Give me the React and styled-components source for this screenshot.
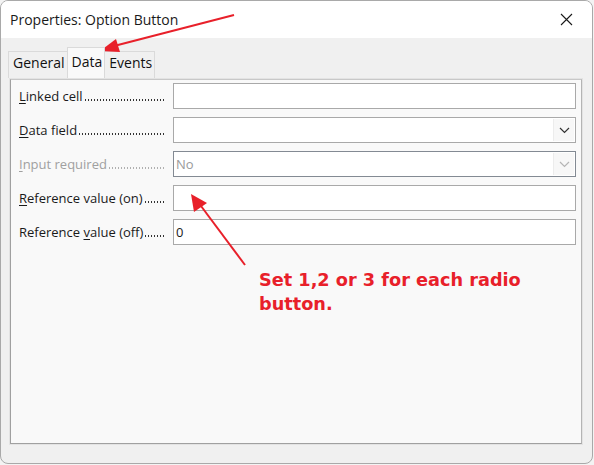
import React from 'react';
import styled, { createGlobalStyle, css } from 'styled-components';

const GlobalStyle = createGlobalStyle`
    html, body {
        margin: 0;
        padding: 0;
        background: #f3f3f3;
    }
    body {
        font-family: "Open Sans", "Noto Sans", "Liberation Sans", sans-serif;
    }
`;

const Window = styled.div`
    position: relative;
    box-sizing: border-box;
    width: 593px;
    height: 464px;
    border: 1px solid #a9a9a9;
    border-radius: 8px;
    background: #f0f0f0;
    overflow: hidden;
    display: flex;
    flex-direction: column;
`;

const TitleBar = styled.div`
    height: 37px;
    flex: 0 0 37px;
    background: #ffffff;
    display: flex;
    align-items: center;
    justify-content: space-between;
    padding: 0 9px 0 9px;
    font-size: 14px;
    color: #1a1a1a;
`;

const CloseButton = styled.div`
    width: 30px;
    height: 30px;
    display: flex;
    align-items: center;
    justify-content: center;
    margin-right: 2px;
`;

const TabBar = styled.div`
    display: flex;
    align-items: flex-end;
    padding: 9px 0 0 8px;
    height: 31px;
    box-sizing: content-box;
`;

const Tab = styled.div`
    box-sizing: border-box;
    height: 27px;
    padding: 0 2px 5px 4px;
    border: 1px solid #dadada;
    border-bottom: none;
    background: #f0f0f0;
    font-size: 14px;
    color: #111;
    display: flex;
    align-items: center;
    margin-left: -1px;

    ${props => props.active && css`
        height: 31px;
        background: #f9f9f9;
        padding-bottom: 3px;
        position: relative;
        z-index: 1;
    `}
`;

const Panel = styled.div`
    margin: 0 9px 0 8px;
    height: 367px;
    box-sizing: border-box;
    border: 1px solid #e3e3e3;
    background: #f9f9f9;
`;

const PanelInner = styled.div`
    box-sizing: border-box;
    height: 100%;
    border: 1px solid #a0a0a0;
    border-top-color: #c8c8c8;
    border-right-color: #b4b4b4;
    padding: 3px 5px 0 8px;
    display: grid;
    grid-template-columns: 154px 1fr;
    grid-auto-rows: 26px;
    row-gap: 8px;
    align-content: start;
`;

const Label = styled.div`
    font-size: 13px;
    width: 146px;
    display: flex;
    align-items: center;
    color: ${props => (props.disabled ? '#a0a0a0' : '#1a1a1a')};
`;

const LabelText = styled.span`
    white-space: pre;

    u {
        text-decoration: underline;
        text-underline-offset: 2px;
    }
`;

const Leader = styled.span`
    flex: 1;
    align-self: center;
    height: 2px;
    margin: 8px 0 0 1px;
    background-image: radial-gradient(circle, ${props => (props.disabled ? '#b0b0b0' : '#333')} 0.7px, transparent 0.9px);
    background-size: 3px 2px;
    background-repeat: repeat-x;
`;

const Field = styled.div`
    box-sizing: border-box;
    border: 1px solid ${props => (props.dark ? '#838a93' : '#a9a9a9')};
    background: #ffffff;
    display: flex;
    align-items: center;
    font-size: 13px;
    padding-left: 2px;
    color: ${props => (props.disabled ? '#9a9a9a' : '#1a1a1a')};
`;

const FieldText = styled.span`
    flex: 1;
`;

const DropButton = styled.div`
    width: 20px;
    align-self: stretch;
    margin: 1px;
    background: #f7f7f7;
    border-left: 1px solid #ececec;
    display: flex;
    align-items: center;
    justify-content: center;
`;

const Note = styled.div`
    position: absolute;
    left: 258px;
    top: 267px;
    font-family: "DejaVu Sans", Verdana, sans-serif;
    font-weight: bold;
    font-size: 17.7px;
    line-height: 24px;
    color: #e8202a;
    pointer-events: none;
`;

const Overlay = styled.svg`
    position: absolute;
    left: -1px;
    top: -1px;
    pointer-events: none;
`;

const Chevron = ({ color }) => (
    <svg width="11" height="7" viewBox="0 0 11 7">
        <path d="M1 1 L5.5 5.5 L10 1" fill="none" stroke={color} strokeWidth="1.2" />
    </svg>
);

const rows = [
    { label: <><u>L</u>inked cell</>, value: '' },
    { label: <><u>D</u>ata field</>, value: '', drop: true },
    { label: <><u>I</u>nput required</>, value: 'No', drop: true, disabled: true },
    { label: <><u>R</u>eference value (on)</>, value: '' },
    { label: <>Reference <u>v</u>alue (off)</>, value: '0' },
];

export default function App() {
    return (
        <>
            <GlobalStyle />
            <Window>
                <TitleBar>
                    <span>Properties: Option Button</span>
                    <CloseButton>
                        <svg width="13" height="13" viewBox="0 0 13 13">
                            <path d="M1 1 L12 12 M12 1 L1 12" stroke="#1a1a1a" strokeWidth="1.1" />
                        </svg>
                    </CloseButton>
                </TitleBar>
                <TabBar>
                    <Tab>General</Tab>
                    <Tab active>Data</Tab>
                    <Tab>Events</Tab>
                </TabBar>
                <Panel>
                    <PanelInner>
                        {rows.map((row, i) => (
                            <React.Fragment key={i}>
                                <Label disabled={row.disabled}>
                                    <LabelText>{row.label}</LabelText>
                                    <Leader disabled={row.disabled} />
                                </Label>
                                <Field dark={row.disabled} disabled={row.disabled}>
                                    <FieldText>{row.value}</FieldText>
                                    {row.drop && (
                                        <DropButton>
                                            <Chevron color={row.disabled ? '#b5b5b5' : '#333'} />
                                        </DropButton>
                                    )}
                                </Field>
                            </React.Fragment>
                        ))}
                    </PanelInner>
                </Panel>
                <Note>
                    Set 1,2 or 3 for each radio<br />button.
                </Note>
                <Overlay width="594" height="465" viewBox="0 0 594 465">
                    <line x1="234" y1="15" x2="114" y2="46" stroke="#e8202a" strokeWidth="2" />
                    <polygon points="100,51 116,39 120,52" fill="#e8202a" />
                    <line x1="245" y1="265" x2="201" y2="206" stroke="#e8202a" strokeWidth="2" />
                    <polygon points="191,194 194,212 207,203" fill="#e8202a" />
                </Overlay>
            </Window>
        </>
    );
}
